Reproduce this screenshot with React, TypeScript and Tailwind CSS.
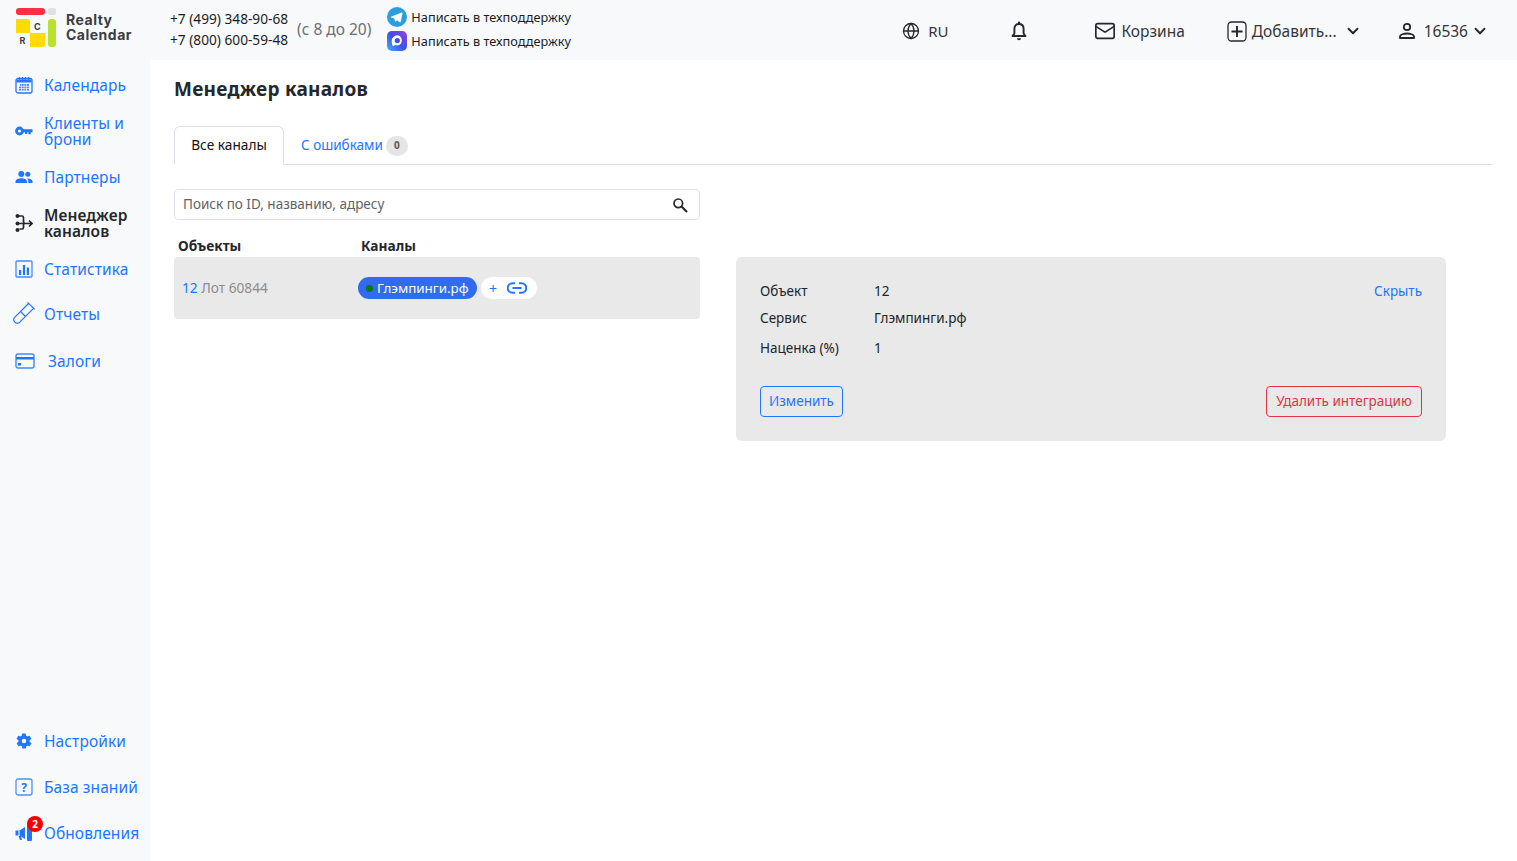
import { ChevronDown, Globe, Mail } from "lucide-react";
import type { ReactNode } from "react";

const blue = "#2176ff";
const dark = "#24272c";

const Logo = () => (
  <svg width="40" height="39" viewBox="0 0 40 39" className="shrink-0 mb-[5px]">
    <rect x="0" y="0" width="29" height="7" rx="3" fill="#ff3041" />
    <rect x="32" y="0" width="8" height="7" rx="2" fill="#e0e0e0" />
    <path d="M0 11h11a3 3 0 0 1 3 3v11H0z" fill="#ffdb00" />
    <path d="M14 25h15v11a3 3 0 0 1-3 3H14z" fill="#ffdb00" />
    <rect x="32" y="11" width="8" height="28" rx="3" fill="#b8e22d" />
    <text x="18" y="21.500" fontSize="9" fontWeight="700" fill="#3a3d42" fontFamily="'Inter', sans-serif">C</text>
    <text x="3.500" y="35.500" fontSize="9" fontWeight="700" fill="#3a3d42" fontFamily="'Inter', sans-serif">R</text>
  </svg>
);

const TelegramIcon = () => (
  <svg width="20" height="20" viewBox="0 0 20 20">
    <circle cx="10" cy="10" r="10" fill="#2a9ee0" />
    <path d="M4 9.800l10.600-4.200c.6-.2 1 .1.900.8l-1.800 8.300c-.1.600-.5.700-1 .5l-2.700-2-1.300 1.300c-.2.200-.4.200-.5-.1l-.9-3-3.200-1c-.6-.2-.6-.6-.1-.6z" fill="#fff" />
  </svg>
);

const MaxIcon = () => (
  <svg width="20" height="20" viewBox="0 0 20 20">
    <defs>
      <linearGradient id="mx" x1="0" y1="1" x2="1" y2="0">
        <stop offset="0" stopColor="#35b8f5" />
        <stop offset="0.5" stopColor="#3f4fe8" />
        <stop offset="1" stopColor="#9a3fe0" />
      </linearGradient>
    </defs>
    <rect width="20" height="20" rx="5" fill="url(#mx)" />
    <path d="M10.300 4.200a5.600 5.600 0 0 0-5.600 5.700c0 1.500.3 3.300.8 4.700.3.700.8.800 1.300.4l1.200-.9c.7.300 1.400.4 2.200.4a5.200 5.200 0 0 0 .1-10.300z" fill="#fff" />
    <circle cx="10.300" cy="9.500" r="2.600" fill="#3f4fe8" />
  </svg>
);

const BellIcon = () => (
  <svg width="18" height="20" viewBox="0 0 18 20" fill="none" className="ml-[62px]">
    <path d="M9 3c-3 0-4.600 2.200-4.600 5v4.500L2.500 15h13l-1.900-2.500V8C13.600 5.200 12 3 9 3z" stroke={dark} strokeWidth="1.900" strokeLinejoin="round" />
    <rect x="7.800" y="0.500" width="2.400" height="3" rx="1.200" fill={dark} />
    <path d="M7 17.200h4a2 2 0 0 1-4 0z" fill={dark} />
  </svg>
);

const UserIcon = () => (
  <svg width="18" height="18" viewBox="0 0 18 18" fill="none" stroke={dark} strokeWidth="1.800" className="ml-[36px]">
    <circle cx="9" cy="5" r="3.200" />
    <path d="M2 16v-1.500c0-2 4-3 7-3s7 1 7 3V16z" strokeLinejoin="round" />
  </svg>
);

const PlusBox = () => (
  <svg width="20" height="21" viewBox="0 0 20 21" fill="none" stroke={dark} className="ml-[42px]">
    <rect x="1" y="1" width="18" height="19" rx="3.500" strokeWidth="1.300" />
    <path d="M10 5v11M4.500 10.500h11" strokeWidth="1.900" />
  </svg>
);

const SearchIcon = () => (
  <svg width="16" height="16" viewBox="0 0 16 16" fill="none" stroke={dark}>
    <circle cx="6.300" cy="6.300" r="4.300" strokeWidth="1.700" />
    <path d="M9.600 9.600L15 15" strokeWidth="2.100" />
  </svg>
);

const LinkIcon = () => (
  <svg width="20" height="12" viewBox="0 0 20 12" fill="none" stroke={blue} strokeWidth="2">
    <path d="M8 1.200H5.500a4.800 4.800 0 0 0 0 9.600H8M12 1.200h2.500a4.800 4.800 0 0 1 0 9.600H12M5.500 6h9" />
  </svg>
);

const CalendarIcon = () => (
  <svg width="18" height="18" viewBox="0 0 18 18" fill="none">
    <rect x="1" y="2.500" width="16" height="14.500" rx="2" stroke={blue} strokeWidth="1.300" />
    <path d="M1.500 3.500h15v3h-15z" fill={blue} />
    <path d="M4.500 1v3M7.500 1v3M10.500 1v3M13.500 1v3" stroke={blue} strokeWidth="1.200" />
    <path d="M5 8h9v6.500H4v-4h1z" fill={blue} opacity=".85" />
    <path d="M4 10.300h10M4 12.500h10M6.500 8v7M9 8v7M11.500 8v7" stroke="#f8f9fb" strokeWidth=".7" />
  </svg>
);

const KeyIcon = () => (
  <svg width="18" height="18" viewBox="0 0 18 18" fill="none">
    <circle cx="4.500" cy="9" r="3" stroke={blue} strokeWidth="2.800" />
    <path d="M7.500 7.200h10v3h-1.700v2h-2.300v-2h-1.200v1.700h-2.300v-1.700H7.500z" fill={blue} />
  </svg>
);

const PeopleIcon = () => (
  <svg width="18" height="18" viewBox="0 0 18 18" fill={blue}>
    <circle cx="6.300" cy="6" r="3" />
    <circle cx="12.800" cy="6.300" r="2.500" />
    <path d="M0.500 15v-1.500c0-2 3.400-3.200 5.800-3.200s5.700 1.200 5.700 3.200V15z" />
    <path d="M13.300 15v-1.700c0-1.200-.5-2.100-1.300-2.800 2.300-.3 5.500.9 5.500 2.800V15z" />
  </svg>
);

const ChannelsIcon = () => (
  <svg width="18" height="20" viewBox="0 0 18 20" fill="none" stroke={dark} strokeWidth="1.700">
    <circle cx="2.500" cy="3" r="2" fill={dark} stroke="none" />
    <circle cx="2.500" cy="10.500" r="2" fill={dark} stroke="none" />
    <circle cx="2.500" cy="17" r="2" fill={dark} stroke="none" />
    <path d="M4 3h3c1 0 1.500.5 1.500 1.500V9c0 1 .5 1.500 1.500 1.500" />
    <path d="M4 10.500h13M14 7.500l3 3-3 3" />
    <path d="M8.500 11v3.500c0 1-.5 1.500-1.500 1.500H4.500" />
  </svg>
);

const StatsIcon = () => (
  <svg width="18" height="18" viewBox="0 0 18 18" fill="none">
    <rect x="1" y="1" width="16" height="16" rx="1" stroke={blue} strokeWidth="1.300" opacity=".85" />
    <path d="M4 10h2.200v5H4zM7.900 5h2.200v10H7.900zM11.800 7.500H14V15h-2.200z" fill={blue} />
  </svg>
);

const TubeIcon = () => (
  <svg width="20" height="20" viewBox="0 0 20 20" fill="none" stroke={blue} strokeWidth="1.200" className="overflow-visible">
    <g transform="rotate(45 10 10)">
      <path d="M6.500-1V18a3.500 3.500 0 0 0 7 0V-1M5-1.500H15M6.500 10h7" />
    </g>
  </svg>
);

const CardIcon = () => (
  <svg width="20" height="16" viewBox="0 0 20 16" fill="none">
    <rect x="1" y="1" width="18" height="14" rx="2" stroke={blue} strokeWidth="1.400" opacity=".85" />
    <rect x="1" y="4" width="18" height="2.500" fill={blue} />
    <rect x="3" y="10" width="3" height="2.500" fill={blue} />
  </svg>
);

const GearIcon = () => (
  <svg width="18" height="18" viewBox="0 0 24 24" fill={blue}>
    <path d="M19.400 13c.1-.3.100-.7.100-1s0-.7-.1-1l2.100-1.600c.2-.2.200-.4.100-.6l-2-3.500c-.1-.2-.4-.3-.6-.2l-2.500 1a7 7 0 0 0-1.700-1l-.4-2.600c0-.3-.2-.5-.5-.5h-4c-.3 0-.5.200-.5.500l-.4 2.600c-.6.300-1.200.6-1.700 1l-2.500-1c-.2-.1-.5 0-.6.200l-2 3.500c-.1.200-.1.400.1.600L4.600 11c-.1.300-.1.700-.1 1s0 .7.100 1l-2.100 1.600c-.2.200-.2.400-.1.600l2 3.500c.1.200.4.300.6.200l2.500-1c.5.400 1.100.7 1.700 1l.4 2.600c0 .3.200.5.500.5h4c.3 0 .5-.2.500-.5l.4-2.600c.6-.3 1.200-.6 1.700-1l2.500 1c.2.100.5 0 .6-.2l2-3.500c.1-.2.100-.4-.1-.6zM12 15a3 3 0 1 1 0-6 3 3 0 0 1 0 6z" />
  </svg>
);

const QuestionIcon = () => (
  <svg width="18" height="18" viewBox="0 0 18 18" fill="none">
    <rect x="1" y="1" width="16" height="16" rx="2" stroke={blue} strokeWidth="1.300" opacity=".8" />
    <text x="9" y="13.500" textAnchor="middle" fontSize="12" fontWeight="700" fill={blue} fontFamily="'Noto Sans', sans-serif">?</text>
  </svg>
);

const HornIcon = () => (
  <svg width="18" height="16" viewBox="0 0 18 16" fill={blue}>
    <path d="M0.500 5.500h3v5h-3z" />
    <path d="M4.500 5.500L10 2v12l-5.500-3.500z" />
    <rect x="12" y="0" width="5" height="16" rx="1" />
    <path d="M3.500 11h2.500l1 4H5z" />
  </svg>
);

const NavItem = ({
  icon,
  active,
  className,
  textClass,
  children,
}: {
  icon: ReactNode;
  active?: boolean;
  className?: string;
  textClass?: string;
  children: ReactNode;
}) => (
  <a className={`flex items-center ${className ?? ""}`}>
    <span className="w-[29px] shrink-0 flex items-center">{icon}</span>
    <span
      className={`text-[15.500px] leading-4 tracking-[0.1px] ${textClass ?? ""} ${active ? "font-semibold text-[#24272c]" : "text-[#2176ff]"}`}
    >
      {children}
    </span>
  </a>
);

export default function App() {
  return (
    <div className="h-[861px] overflow-hidden bg-white flex flex-col font-['Noto_Sans',sans-serif] text-[#212529]">
      <header className="h-[60px] shrink-0 bg-[#f8f9fb] flex items-center pl-4 pr-[28px]">
        <Logo />
        <div className="ml-[10px] w-[104px] pb-[7px] text-[14px] leading-[15px] tracking-[0.5px] font-bold text-[#3a3d42] font-['Inter',sans-serif]">
          <div>Realty</div>
          <div>Calendar</div>
        </div>
        <div className="text-[13.700px] leading-[21px] text-[#1c1c1c] pb-[2px]">
          <div>+7 (499) 348-90-68</div>
          <div>+7 (800) 600-59-48</div>
        </div>
        <div className="ml-[9px] text-[15.500px] text-[#6c6f75]">(с 8 до 20)</div>
        <div className="ml-[16px] pb-[2px] flex flex-col gap-1 text-[12.750px] text-[#1c1c1c] leading-5">
          <div className="flex items-center gap-1"><TelegramIcon />Написать в техподдержку</div>
          <div className="flex items-center gap-1"><MaxIcon />Написать в техподдержку</div>
        </div>
        <div className="ml-auto pt-[2px] flex items-center text-[15.500px] text-[#33373d]">
          <Globe size={18} strokeWidth={1.700} className="text-[#24272c]" />
          <span className="ml-[8px] text-[15px]">RU</span>
          <BellIcon />
          <Mail size={22} strokeWidth={1.800} className="ml-[66px] text-[#24272c]" />
          <span className="ml-[5px] mt-[2px]">Корзина</span>
          <PlusBox />
          <span className="ml-[5px] mt-[2px]">Добавить...</span>
          <ChevronDown size={18} strokeWidth={2.500} className="ml-[7px] text-[#24272c]" />
          <UserIcon />
          <span className="ml-[8px] mt-[2px]">16536</span>
          <ChevronDown size={18} strokeWidth={2.500} className="ml-[3px] text-[#24272c]" />
        </div>
      </header>

      <div className="flex-1 flex min-h-0">
        <aside className="w-[150px] shrink-0 bg-[#f8f9fb] pl-[15px] pt-[16px] pb-[20px] flex flex-col">
          <NavItem icon={<CalendarIcon />}>Календарь</NavItem>
          <NavItem icon={<KeyIcon />} className="mt-[21px]">Клиенты и брони</NavItem>
          <NavItem icon={<PeopleIcon />} className="mt-[21px]">Партнеры</NavItem>
          <NavItem icon={<ChannelsIcon />} active className="mt-[21px]">Менеджер каналов</NavItem>
          <NavItem icon={<StatsIcon />} className="mt-[21px]">Статистика</NavItem>
          <NavItem icon={<TubeIcon />} className="mt-[26px] -ml-[2px]" textClass="ml-[2px]">Отчеты</NavItem>
          <NavItem icon={<CardIcon />} className="mt-[29px]" textClass="ml-[4px]">Залоги</NavItem>

          <div className="mt-auto flex flex-col">
            <NavItem icon={<GearIcon />}>Настройки</NavItem>
            <NavItem icon={<QuestionIcon />} className="mt-[28px]">База знаний</NavItem>
            <div className="relative mt-[29px]">
              <NavItem icon={<HornIcon />}>Обновления</NavItem>
              <span className="absolute left-[12px] -top-[9px] w-4 h-4 rounded-full bg-[#f00000] text-white text-[10px] font-bold flex items-center justify-center">2</span>
            </div>
          </div>
        </aside>

        <main className="flex-1 min-w-0 pl-6 pr-6 pt-[17px]">
          <h1 className="text-[19px] leading-6 font-bold tracking-[0.25px] text-[#24272c]">Менеджер каналов</h1>

          <div className="mt-[25px] h-[39px] flex border-b border-[#dee2e6]">
            <div className="w-[110px] h-[39px] border border-[#dee2e6] border-b-white rounded-t-md bg-white flex items-center justify-center text-[13.700px] text-[#111]">
              Все каналы
            </div>
            <div className="ml-[17px] h-[38px] flex items-center text-[13.500px] text-[#2176ff]">
              С ошибками
              <span className="ml-[3px] mt-[1px] w-[22px] h-[20px] rounded-full bg-[#e5e5e5] text-[#555] text-[10px] font-bold flex items-center justify-center">0</span>
            </div>
          </div>

          <div className="mt-6 w-[526px] h-[31px] border border-[#dee2e6] rounded flex items-center pl-2 pr-[11px] text-[13.500px] text-[#5f6368]">
            <span className="flex-1">Поиск по ID, названию, адресу</span>
            <SearchIcon />
          </div>

          <div className="mt-[17px] flex items-start">
            <div className="w-[526px] shrink-0">
              <div className="flex text-[13.700px] leading-[18px] font-bold text-[#24272c] pl-1">
                <div className="w-[183px]">Объекты</div>
                <div>Каналы</div>
              </div>
              <div className="h-[62px] mt-[2px] bg-[#e9e9e9] rounded flex items-center pl-2 text-[13.700px]">
                <div className="w-[176px]">
                  <span className="text-[#2176ff]">12</span>
                  <span className="text-[#8c8c8c]"> Лот 60844</span>
                </div>
                <span className="h-[22px] w-[119px] rounded-full bg-[#316bf0] text-white text-[13.400px] flex items-center pl-2">
                  <span className="w-[7px] h-[7px] rounded-full bg-[#0a7a0a] mr-1" />
                  Глэмпинги.рф
                </span>
                <span className="ml-1 h-[22px] w-[56px] rounded-full bg-white flex items-center pl-2 text-[#2176ff] text-[14px] gap-[10px]">
                  +
                  <LinkIcon />
                </span>
              </div>
            </div>

            <section className="ml-9 mt-5 w-[710px] h-[184px] shrink-0 bg-[#e9e9e9] rounded-md pl-6 pr-6 pt-[25px] text-[13.500px] text-[#212529]">
              <div className="flex h-[18px] items-center">
                <div className="w-[114px]">Объект</div>
                <div className="flex-1">12</div>
                <a className="text-[#2176ff]">Скрыть</a>
              </div>
              <div className="flex h-[18px] items-center mt-[9px]">
                <div className="w-[114px]">Сервис</div>
                <div>Глэмпинги.рф</div>
              </div>
              <div className="flex h-[18px] items-center mt-[12px]">
                <div className="w-[114px]">Наценка (%)</div>
                <div>1</div>
              </div>
              <div className="flex justify-between mt-[29px]">
                <button className="h-[31px] w-[83px] border border-[#2176ff] rounded text-[#2176ff]">Изменить</button>
                <button className="h-[31px] w-[156px] border border-[#dc3545] rounded text-[#dc3545]">Удалить интеграцию</button>
              </div>
            </section>
          </div>
        </main>
      </div>
    </div>
  );
}
